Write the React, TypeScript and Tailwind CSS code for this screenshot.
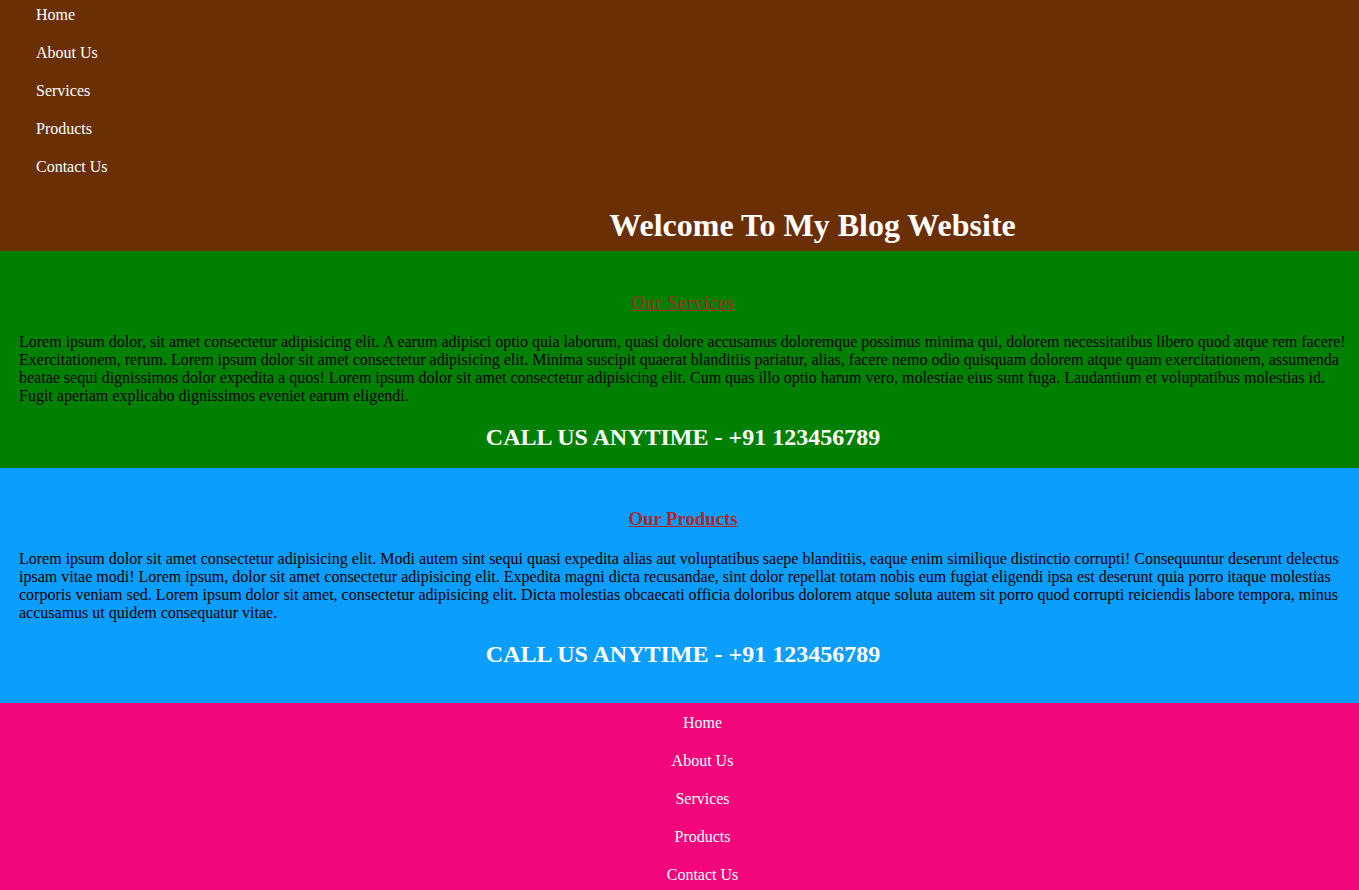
const links = ['Home', 'About Us', 'Services', 'Products', 'Contact Us']

const servicesText =
  'Lorem ipsum dolor, sit amet consectetur adipisicing elit. A earum adipisci optio quia laborum, quasi dolore accusamus doloremque possimus minima qui, dolorem necessitatibus libero quod atque rem facere! Exercitationem, rerum. Lorem ipsum dolor sit amet consectetur adipisicing elit. Minima suscipit quaerat blanditiis pariatur, alias, facere nemo odio quisquam dolorem atque quam exercitationem, assumenda beatae sequi dignissimos dolor expedita a quos! Lorem ipsum dolor sit amet consectetur adipisicing elit. Cum quas illo optio harum vero, molestiae eius sunt fuga. Laudantium et voluptatibus molestias id. Fugit aperiam explicabo dignissimos eveniet earum eligendi.'

const productsText =
  'Lorem ipsum dolor sit amet consectetur adipisicing elit. Modi autem sint sequi quasi expedita alias aut voluptatibus saepe blanditiis, eaque enim similique distinctio corrupti! Consequuntur deserunt delectus ipsam vitae modi! Lorem ipsum, dolor sit amet consectetur adipisicing elit. Expedita magni dicta recusandae, sint dolor repellat totam nobis eum fugiat eligendi ipsa est deserunt quia porro itaque molestias corporis veniam sed. Lorem ipsum dolor sit amet, consectetur adipisicing elit. Dicta molestias obcaecati officia doloribus dolorem atque soluta autem sit porro quod corrupti reiciendis labore tempora, minus accusamus ut quidem consequatur vitae.'

export default function App() {
  return (
    <div className="font-['Liberation_Serif',serif] text-base text-black">
      {/* Header */}
      <header className="bg-[#6b2f06] pb-[7px]">
        <ul className="pt-[6px] pl-[36px]">
          {links.map((l) => (
            <li key={l} className="h-[38px] leading-[18px] text-white">
              <a href="#">{l}</a>
            </li>
          ))}
        </ul>
        <h1 className="mt-[11px] pl-[266px] text-center text-[32px] font-bold leading-[37px] text-white">
          Welcome To My Blog Website
        </h1>
      </header>

      {/* Services */}
      <section className="bg-[#008000] pl-[19px] pr-[12px] pt-[41px] pb-[17px]">
        <h3 className="text-center text-[18.72px] leading-[22px] tracking-[0.5px] text-[#a52a2a]">
          <a href="#" className="underline">Our Services</a>
        </h3>
        <p className="mt-[19px] leading-[18px]">{servicesText}</p>
        <h2 className="mt-[18px] text-center text-2xl font-bold leading-[28px] text-white">
          CALL US ANYTIME - +91 123456789
        </h2>
      </section>

      {/* Products */}
      <section className="bg-[#0c9efd] pl-[19px] pr-[12px] pt-[40px] pb-[35px]">
        <h3 className="text-center text-[18.72px] font-bold leading-[22px] text-[#a52a2a]">
          <a href="#" className="underline">Our Products</a>
        </h3>
        <p className="mt-[20px] leading-[18px]">{productsText}</p>
        <h2 className="mt-[18px] text-center text-2xl font-bold leading-[28px] text-white">
          CALL US ANYTIME - +91 123456789
        </h2>
      </section>

      {/* Footer */}
      <footer className="bg-[#f3057b] pt-[11px] pb-[20px]">
        <ul className="pl-[46px] text-center">
          {links.map((l) => (
            <li key={l} className="h-[38px] leading-[18px] text-white">
              <a href="#">{l}</a>
            </li>
          ))}
        </ul>
      </footer>
    </div>
  )
}
